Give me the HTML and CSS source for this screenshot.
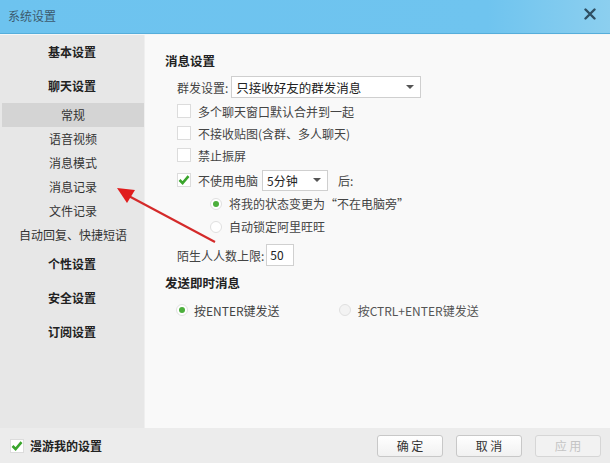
FILE: index.html
```html
<!DOCTYPE html>
<html lang="zh-CN">
<head>
    <meta charset="UTF-8">
    <title>系统设置</title>
    <link rel="stylesheet" href="styles.css">
</head>
<body>
    <div class="window">
        <div class="titlebar">
            <span class="title">系统设置</span>
            <span class="close">
                <svg width="12" height="12" viewBox="0 0 12 12"><path d="M1.5 1.5 L10.5 10.5 M10.5 1.5 L1.5 10.5" stroke="#2f4f63" stroke-width="2.4" stroke-linecap="round"/></svg>
            </span>
        </div>
        <div class="main">
            <div class="sidebar">
                <div class="group">基本设置</div>
                <div class="group">聊天设置</div>
                <div class="sub">
                    <div class="text active">常规</div>
                    <div class="text">语音视频</div>
                    <div class="text">消息模式</div>
                    <div class="text">消息记录</div>
                    <div class="text">文件记录</div>
                    <div class="text">自动回复、快捷短语</div>
                </div>
                <div class="group">个性设置</div>
                <div class="group">安全设置</div>
                <div class="group">订阅设置</div>
            </div>
            <div class="content">
                <div class="heading">消息设置</div>
                <div class="row indent first">
                    <span>群发设置:</span>
                    <div class="select wide"><span>只接收好友的群发消息</span><i class="caret"></i></div>
                </div>
                <div class="row indent check-row gap"><i class="box"></i><span>多个聊天窗口默认合并到一起</span></div>
                <div class="row indent check-row"><i class="box"></i><span>不接收贴图(含群、多人聊天)</span></div>
                <div class="row indent check-row"><i class="box"></i><span>禁止振屏</span></div>
                <div class="row indent check-row tall gap">
                    <i class="box checked"><svg width="14" height="14" viewBox="0 0 14 14"><path d="M2.5 7 L5.6 10 L11.5 3.2" fill="none" stroke="#3aa52c" stroke-width="2.6"/></svg></i>
                    <span>不使用电脑</span>
                    <div class="select short"><span>5分钟</span><i class="caret"></i></div>
                    <span class="after">后:</span>
                </div>
                <div class="row radio-row deep"><i class="radio on"></i><span>将我的状态变更为“不在电脑旁”</span></div>
                <div class="row radio-row deep"><i class="radio"></i><span>自动锁定阿里旺旺</span></div>
                <div class="row indent limit">
                    <span>陌生人人数上限:</span>
                    <div class="input">50</div>
                </div>
                <div class="heading second">发送即时消息</div>
                <div class="row indent send">
                    <div class="option"><i class="radio on"></i><span>按ENTER键发送</span></div>
                    <div class="option"><i class="radio off"></i><span>按CTRL+ENTER键发送</span></div>
                </div>
            </div>
        </div>
        <div class="footer">
            <div class="roam">
                <i class="box checked"><svg width="14" height="14" viewBox="0 0 14 14"><path d="M2.5 7 L5.6 10 L11.5 3.2" fill="none" stroke="#3aa52c" stroke-width="2.6"/></svg></i>
                <span>漫游我的设置</span>
            </div>
            <div class="buttons">
                <div class="btn">确 定</div>
                <div class="btn">取 消</div>
                <div class="btn disabled">应 用</div>
            </div>
        </div>
        <svg class="arrow" width="110" height="60" viewBox="0 0 110 60">
            <line x1="100" y1="58" x2="10" y2="10" stroke="#d42a2a" stroke-width="2"/>
            <polygon points="2,4 20,6 12,19" fill="#e01c1c"/>
        </svg>
    </div>
</body>
</html>
```

FILE: styles.css
```css
* {
    box-sizing: border-box;
}

body {
    margin: 0;
    font-family: "Noto Sans CJK SC", "Liberation Sans", sans-serif;
    font-size: 12px;
    color: #333;
}

.window {
    position: relative;
    width: 610px;
    height: 463px;
    display: flex;
    flex-direction: column;
    background: #ededed;
}

.titlebar {
    height: 34px;
    background: linear-gradient(to right, #6dc3ef 0%, #6fc4ef 80%, #8ccfef 100%);
    border-bottom: 1px solid #56aedb;
    display: flex;
    align-items: center;
    justify-content: space-between;
    padding: 0 14px 2px 8px;
}

.titlebar .title {
    color: #3c5a6e;
    font-size: 12px;
}

.titlebar .close {
    display: flex;
    margin-top: -4px;
}

.main {
    flex: 1;
    display: flex;
    padding-top: 1px;
    background: #f6f6f6;
}

.sidebar {
    width: 145px;
    background: #e7e7e7;
    border-right: 1px solid #efefef;
}

.sidebar .group {
    height: 34px;
    line-height: 34px;
    text-align: center;
    font-weight: bold;
    color: #222;
}

.sidebar .text {
    height: 24px;
    line-height: 24px;
    text-align: center;
    color: #333;
    margin-left: 2px;
}

.sidebar .text.active {
    background: #d4d4d4;
}

.content {
    flex: 1;
    background: #f9f9f9;
    padding: 16px 0 0 20px;
}

.heading {
    height: 20px;
    line-height: 20px;
    font-weight: bold;
    color: #222;
    font-size: 12.5px;
}

.heading.second {
    margin-top: 7px;
}

.row {
    display: flex;
    align-items: center;
    height: 22px;
    color: #444;
}

.row.indent {
    padding-left: 12px;
}

.row.first {
    margin-top: 5px;
}

.row.gap {
    margin-top: 2px;
}

.row.tall {
    height: 24px;
}

.row.deep {
    padding-left: 45px;
    height: 23px;
}

.row.limit {
    margin-top: 6px;
}

.row.send {
    margin-top: 6px;
}

.box {
    display: inline-block;
    width: 14px;
    height: 14px;
    border: 1px solid #dcdcdc;
    background: #fff;
    margin-right: 7px;
    position: relative;
}

.box svg {
    position: absolute;
    left: -1px;
    top: -1px;
}

.select {
    display: flex;
    align-items: center;
    justify-content: space-between;
    height: 22px;
    border: 1px solid #cfcfcf;
    background: #fff;
    color: #222;
    padding: 0 6px 0 4px;
    margin-left: 3px;
}

.select.wide {
    width: 190px;
    font-size: 12.5px;
}

.select.short {
    width: 66px;
    height: 21px;
    margin-left: 4px;
}

.caret {
    width: 0;
    height: 0;
    border-left: 4px solid transparent;
    border-right: 4px solid transparent;
    border-top: 4px solid #555;
}

.after {
    margin-left: 10px;
}

.radio {
    display: inline-block;
    width: 12px;
    height: 12px;
    border-radius: 50%;
    border: 1px solid #e0e0e0;
    background: #fff;
    margin-right: 7px;
    position: relative;
}

.radio.on::after {
    content: "";
    position: absolute;
    left: 2px;
    top: 2px;
    width: 6px;
    height: 6px;
    border-radius: 50%;
    background: #4caf3c;
}

.radio.off {
    background: #f3f3f3;
}

.input {
    width: 28px;
    height: 22px;
    line-height: 20px;
    border: 1px solid #d0d0d0;
    background: #fff;
    padding-left: 3px;
    margin-left: 2px;
    color: #222;
}

.send .option {
    display: flex;
    align-items: center;
}

.send .option + .option {
    margin-left: 59px;
    color: #555;
}

.send .option:first-child .radio {
    margin-left: -1px;
    margin-right: 6px;
}

.footer {
    height: 35px;
    background: #ececec;
    display: flex;
    align-items: center;
    justify-content: space-between;
    padding: 0 9px 0 10px;
}

.roam {
    display: flex;
    align-items: center;
    font-weight: bold;
    color: #222;
}

.roam .box {
    margin-right: 6px;
}

.buttons {
    display: flex;
    gap: 13px;
}

.btn {
    width: 66px;
    height: 22px;
    line-height: 20px;
    text-align: center;
    border: 1px solid #c8c8c8;
    border-radius: 3px;
    background: linear-gradient(#ffffff, #f1f1f1);
    color: #333;
}

.btn.disabled {
    color: #c4c4c4;
    border-color: #d6d6d6;
    background: #f2f2f2;
}

.arrow {
    position: absolute;
    left: 115px;
    top: 184px;
}
```
